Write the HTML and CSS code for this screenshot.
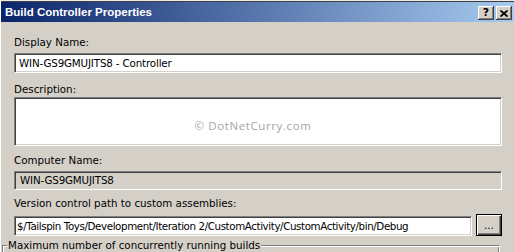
FILE: index.html
```html
<!DOCTYPE html>
<html>
<head>
<meta charset="utf-8">
<link rel="stylesheet" href="styles.css">
</head>
<body>
<div class="window">
  <div class="edge"></div>
  <div class="titlebar">
    <span class="title">Build Controller Properties</span>
    <div class="caption-btns">
      <div class="cbtn help">?</div>
      <div class="cbtn close"><svg width="8" height="7" viewBox="0 0 8 7"><path d="M0.5 0.5L7.5 6.5M7.5 0.5L0.5 6.5" stroke="#000" stroke-width="1.8" fill="none"/></svg></div>
    </div>
  </div>
  <div class="content">
    <div class="label">Display Name:</div>
    <div class="field name">WIN-GS9GMUJITS8 - Controller</div>
    <div class="label l2">Description:</div>
    <div class="field area"><span class="wm">© DotNetCurry.com</span></div>
    <div class="label l3">Computer Name:</div>
    <div class="field disabled">WIN-GS9GMUJITS8</div>
    <div class="label l4">Version control path to custom assemblies:</div>
    <div class="pathrow">
      <div class="field path">$/Tailspin Toys/Development/Iteration 2/CustomActivity/CustomActivity/bin/Debug</div>
      <div class="browse">...</div>
    </div>
    <div class="group">
      <div class="ghead"><span class="gl"></span><span class="legend">Maximum number of concurrently running builds</span><span class="gr"></span></div>
    </div>
  </div>
</div>
</body>
</html>
```
FILE: styles.css
```css
* { box-sizing: border-box; }
html, body { margin: 0; padding: 0; }
body {
  width: 514px;
  height: 252px;
  overflow: hidden;
  background: #d4d0c8;
  font-family: "DejaVu Sans", sans-serif;
  font-size: 10.3px;
  color: #000;
}
.window {
  height: 252px;
  border-left: 1px solid #fff;
  border-top: 1px solid #ececec;
}
.edge { height: 1px; background: #404040; }
.titlebar {
  height: 20px;
  display: flex;
  justify-content: space-between;
  align-items: flex-start;
  background: linear-gradient(to right, #0a246a, #a6caf0);
  padding: 0 2px 0 4px;
}
.title {
  color: #fff;
  font: bold 11.5px "Liberation Sans", sans-serif;
  line-height: 21px;
}
.caption-btns { display: flex; gap: 2px; margin-top: 4px; }
.cbtn {
  width: 16px;
  height: 14px;
  background: #d4d0c8;
  box-shadow: inset -1px -1px #404040, inset 1px 1px #fff, inset -2px -2px #808080, inset 2px 2px #d4d0c8;
  display: flex;
  align-items: center;
  justify-content: center;
}
.help {
  font: bold 11px "DejaVu Sans", sans-serif;
  line-height: 14px;
  padding-bottom: 1px;
}
.content { padding: 14px 12px 0 13px; }
.label { height: 13px; line-height: 13px; white-space: nowrap; }
.field {
  height: 20px;
  background: #fff;
  border-top: 1px solid #808080;
  border-left: 1px solid #808080;
  border-right: 1px solid #fff;
  border-bottom: 1px solid #fff;
  box-shadow: inset 1px 1px #404040, inset -1px -1px #d4d0c8;
  padding-left: 4px;
  line-height: 18px;
  white-space: nowrap;
  overflow: hidden;
}
.name { margin-top: 4px; letter-spacing: -0.15px; }
.l2 { margin-top: 10px; }
.area {
  height: 49px;
  margin-top: 1px;
  display: flex;
  align-items: center;
  justify-content: center;
  padding: 9px 10px 0 0;
}
.wm {
  font-family: "Open Sans", sans-serif;
  font-size: 11.5px;
  letter-spacing: 0.6px;
  color: #a5a5a5;
  line-height: 14px;
}
.l3 { margin-top: 8px; }
.disabled {
  margin-top: 4px;
  height: 19px;
  background: #d4d0c8;
  line-height: 17px;
  padding-left: 5px;
  letter-spacing: -0.15px;
}
.l4 { margin-top: 7px; }
.pathrow { display: flex; align-items: flex-start; margin-top: 4px; height: 22px; }
.path { width: 458px; margin-top: 2px; padding-left: 2px; letter-spacing: -0.4px; }
.browse {
  margin-left: 4px;
  width: 26px;
  height: 22px;
  border: 1px solid #000;
  background: #d4d0c8;
  box-shadow: inset 1px 1px #fff, inset -1px -1px #404040, inset -2px -2px #808080;
  text-align: center;
  line-height: 20px;
}
.group { margin-top: 3px; margin-left: -12px; width: 498px; }
.ghead { display: flex; height: 13px; line-height: 13px; }
.gl {
  width: 5px;
  margin-top: 6px;
  border-top: 1px solid #808080;
  border-left: 1px solid #808080;
  box-shadow: inset 1px 1px #fff;
}
.legend { padding: 0 1px; white-space: nowrap; }
.gr {
  flex: 1;
  margin-top: 6px;
  border-top: 1px solid #808080;
  border-right: 1px solid #fff;
  box-shadow: inset 0 1px #fff, inset -1px 0 #808080;
}
```
